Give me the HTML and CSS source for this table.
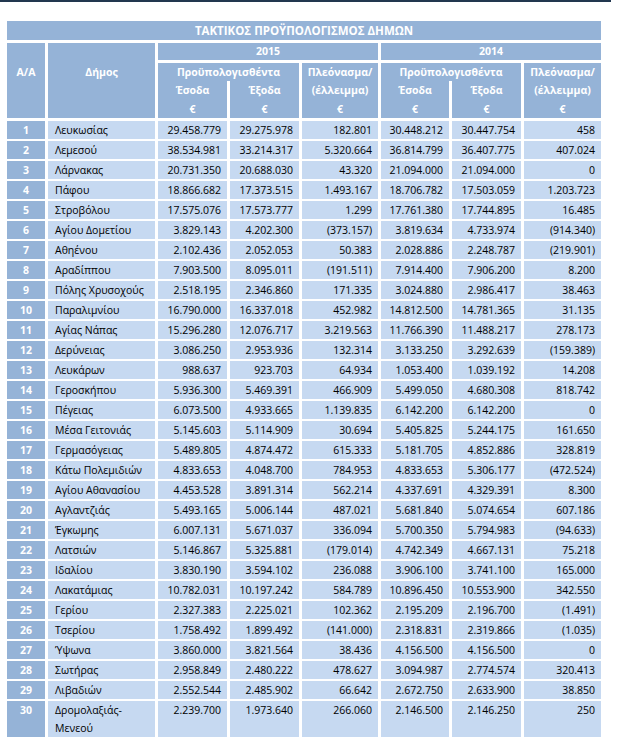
FILE: index.html
```html
<!DOCTYPE html>
<html lang="el">
<head>
<meta charset="utf-8">
<title>Τακτικός Προϋπολογισμός Δήμων</title>
<link rel="stylesheet" href="styles.css">
</head>
<body>
<div class="topline"></div>
<div class="sheet">
  <div class="head">
    <div class="h title">ΤΑΚΤΙΚΟΣ ΠΡΟΫΠΟΛΟΓΙΣΜΟΣ ΔΗΜΩΝ</div>
    <div class="h aa">Α/Α</div>
    <div class="h dimos">Δήμος</div>
    <div class="h y15">2015</div>
    <div class="h y14">2014</div>
    <div class="h prop15">Προϋπολογισθέντα</div>
    <div class="h prop14">Προϋπολογισθέντα</div>
    <div class="h pl15"><span>Πλεόνασμα/</span><span>(έλλειμμα)</span><span>€</span></div>
    <div class="h pl14"><span>Πλεόνασμα/</span><span>(έλλειμμα)</span><span>€</span></div>
    <div class="h es15"><span>Έσοδα</span><span>€</span></div>
    <div class="h ex15"><span>Έξοδα</span><span>€</span></div>
    <div class="h es14"><span>Έσοδα</span><span>€</span></div>
    <div class="h ex14"><span>Έξοδα</span><span>€</span></div>
  </div>
  <div class="body">
    <div class="n">1</div><div class="t">Λευκωσίας</div><div class="v">29.458.779</div><div class="v">29.275.978</div><div class="v">182.801</div><div class="v">30.448.212</div><div class="v">30.447.754</div><div class="v">458</div>
    <div class="n">2</div><div class="t">Λεμεσού</div><div class="v">38.534.981</div><div class="v">33.214.317</div><div class="v">5.320.664</div><div class="v">36.814.799</div><div class="v">36.407.775</div><div class="v">407.024</div>
    <div class="n">3</div><div class="t">Λάρνακας</div><div class="v">20.731.350</div><div class="v">20.688.030</div><div class="v">43.320</div><div class="v">21.094.000</div><div class="v">21.094.000</div><div class="v">0</div>
    <div class="n">4</div><div class="t">Πάφου</div><div class="v">18.866.682</div><div class="v">17.373.515</div><div class="v">1.493.167</div><div class="v">18.706.782</div><div class="v">17.503.059</div><div class="v">1.203.723</div>
    <div class="n">5</div><div class="t">Στροβόλου</div><div class="v">17.575.076</div><div class="v">17.573.777</div><div class="v">1.299</div><div class="v">17.761.380</div><div class="v">17.744.895</div><div class="v">16.485</div>
    <div class="n">6</div><div class="t">Αγίου Δομετίου</div><div class="v">3.829.143</div><div class="v">4.202.300</div><div class="v">(373.157)</div><div class="v">3.819.634</div><div class="v">4.733.974</div><div class="v">(914.340)</div>
    <div class="n">7</div><div class="t">Αθηένου</div><div class="v">2.102.436</div><div class="v">2.052.053</div><div class="v">50.383</div><div class="v">2.028.886</div><div class="v">2.248.787</div><div class="v">(219.901)</div>
    <div class="n">8</div><div class="t">Αραδίππου</div><div class="v">7.903.500</div><div class="v">8.095.011</div><div class="v">(191.511)</div><div class="v">7.914.400</div><div class="v">7.906.200</div><div class="v">8.200</div>
    <div class="n">9</div><div class="t">Πόλης Χρυσοχούς</div><div class="v">2.518.195</div><div class="v">2.346.860</div><div class="v">171.335</div><div class="v">3.024.880</div><div class="v">2.986.417</div><div class="v">38.463</div>
    <div class="n">10</div><div class="t">Παραλιμνίου</div><div class="v">16.790.000</div><div class="v">16.337.018</div><div class="v">452.982</div><div class="v">14.812.500</div><div class="v">14.781.365</div><div class="v">31.135</div>
    <div class="n">11</div><div class="t">Αγίας Νάπας</div><div class="v">15.296.280</div><div class="v">12.076.717</div><div class="v">3.219.563</div><div class="v">11.766.390</div><div class="v">11.488.217</div><div class="v">278.173</div>
    <div class="n">12</div><div class="t">Δερύνειας</div><div class="v">3.086.250</div><div class="v">2.953.936</div><div class="v">132.314</div><div class="v">3.133.250</div><div class="v">3.292.639</div><div class="v">(159.389)</div>
    <div class="n">13</div><div class="t">Λευκάρων</div><div class="v">988.637</div><div class="v">923.703</div><div class="v">64.934</div><div class="v">1.053.400</div><div class="v">1.039.192</div><div class="v">14.208</div>
    <div class="n">14</div><div class="t">Γεροσκήπου</div><div class="v">5.936.300</div><div class="v">5.469.391</div><div class="v">466.909</div><div class="v">5.499.050</div><div class="v">4.680.308</div><div class="v">818.742</div>
    <div class="n">15</div><div class="t">Πέγειας</div><div class="v">6.073.500</div><div class="v">4.933.665</div><div class="v">1.139.835</div><div class="v">6.142.200</div><div class="v">6.142.200</div><div class="v">0</div>
    <div class="n">16</div><div class="t">Μέσα Γειτονιάς</div><div class="v">5.145.603</div><div class="v">5.114.909</div><div class="v">30.694</div><div class="v">5.405.825</div><div class="v">5.244.175</div><div class="v">161.650</div>
    <div class="n">17</div><div class="t">Γερμασόγειας</div><div class="v">5.489.805</div><div class="v">4.874.472</div><div class="v">615.333</div><div class="v">5.181.705</div><div class="v">4.852.886</div><div class="v">328.819</div>
    <div class="n">18</div><div class="t">Κάτω Πολεμιδιών</div><div class="v">4.833.653</div><div class="v">4.048.700</div><div class="v">784.953</div><div class="v">4.833.653</div><div class="v">5.306.177</div><div class="v">(472.524)</div>
    <div class="n">19</div><div class="t">Αγίου Αθανασίου</div><div class="v">4.453.528</div><div class="v">3.891.314</div><div class="v">562.214</div><div class="v">4.337.691</div><div class="v">4.329.391</div><div class="v">8.300</div>
    <div class="n">20</div><div class="t">Αγλαντζιάς</div><div class="v">5.493.165</div><div class="v">5.006.144</div><div class="v">487.021</div><div class="v">5.681.840</div><div class="v">5.074.654</div><div class="v">607.186</div>
    <div class="n">21</div><div class="t">Έγκωμης</div><div class="v">6.007.131</div><div class="v">5.671.037</div><div class="v">336.094</div><div class="v">5.700.350</div><div class="v">5.794.983</div><div class="v">(94.633)</div>
    <div class="n">22</div><div class="t">Λατσιών</div><div class="v">5.146.867</div><div class="v">5.325.881</div><div class="v">(179.014)</div><div class="v">4.742.349</div><div class="v">4.667.131</div><div class="v">75.218</div>
    <div class="n">23</div><div class="t">Ιδαλίου</div><div class="v">3.830.190</div><div class="v">3.594.102</div><div class="v">236.088</div><div class="v">3.906.100</div><div class="v">3.741.100</div><div class="v">165.000</div>
    <div class="n">24</div><div class="t">Λακατάμιας</div><div class="v">10.782.031</div><div class="v">10.197.242</div><div class="v">584.789</div><div class="v">10.896.450</div><div class="v">10.553.900</div><div class="v">342.550</div>
    <div class="n">25</div><div class="t">Γερίου</div><div class="v">2.327.383</div><div class="v">2.225.021</div><div class="v">102.362</div><div class="v">2.195.209</div><div class="v">2.196.700</div><div class="v">(1.491)</div>
    <div class="n">26</div><div class="t">Τσερίου</div><div class="v">1.758.492</div><div class="v">1.899.492</div><div class="v">(141.000)</div><div class="v">2.318.831</div><div class="v">2.319.866</div><div class="v">(1.035)</div>
    <div class="n">27</div><div class="t">Ύψωνα</div><div class="v">3.860.000</div><div class="v">3.821.564</div><div class="v">38.436</div><div class="v">4.156.500</div><div class="v">4.156.500</div><div class="v">0</div>
    <div class="n">28</div><div class="t">Σωτήρας</div><div class="v">2.958.849</div><div class="v">2.480.222</div><div class="v">478.627</div><div class="v">3.094.987</div><div class="v">2.774.574</div><div class="v">320.413</div>
    <div class="n">29</div><div class="t">Λιβαδιών</div><div class="v">2.552.544</div><div class="v">2.485.902</div><div class="v">66.642</div><div class="v">2.672.750</div><div class="v">2.633.900</div><div class="v">38.850</div>
    <div class="n">30</div><div class="t">Δρομολαξιάς-<br>Μενεού</div><div class="v">2.239.700</div><div class="v">1.973.640</div><div class="v">266.060</div><div class="v">2.146.500</div><div class="v">2.146.250</div><div class="v">250</div>
  </div>
</div>
</body>
</html>
```
FILE: styles.css
```css
html, body {
  margin: 0;
  padding: 0;
  background: #ffffff;
}
body {
  font-family: "Open Sans", "Noto Sans", sans-serif;
  font-size: 10.5px;
  color: #000;
}
.topline {
  width: 611px;
  height: 2px;
  background: #22374f;
}
.sheet {
  margin: 19px 0 0 7px;
  width: 594px;
}
.head, .body {
  display: grid;
  grid-template-columns: 38px 107px 69px 69px 76px 68px 69px 77px;
  column-gap: 3px;
}
.head {
  grid-template-rows: 22px 20px 18px 19px 18px;
}
.h {
  background: #95b3d7;
  color: #fff;
  font-weight: 700;
  text-align: center;
  line-height: 18px;
}
.h span { display: block; }
.title {
  grid-column: 1 / -1;
  grid-row: 1;
  margin-bottom: 3px;
  line-height: 19px;
  font-size: 11.5px;
}
.aa { grid-column: 1; grid-row: 2 / 6; padding-top: 20px; }
.dimos { grid-column: 2; grid-row: 2 / 6; padding-top: 20px; }
.y15 { grid-column: 3 / 6; grid-row: 2; margin-bottom: 3px; line-height: 17px; }
.y14 { grid-column: 6 / 9; grid-row: 2; margin-bottom: 3px; line-height: 17px; }
.prop15 { grid-column: 3 / 5; grid-row: 3; }
.prop14 { grid-column: 6 / 8; grid-row: 3; }
.pl15 { grid-column: 5; grid-row: 3 / 6; }
.pl14 { grid-column: 8; grid-row: 3 / 6; }
.pl15 span, .pl14 span { line-height: 18.3px; }
.es15 { grid-column: 3; grid-row: 4 / 6; }
.ex15 { grid-column: 4; grid-row: 4 / 6; }
.es14 { grid-column: 6; grid-row: 4 / 6; }
.ex14 { grid-column: 7; grid-row: 4 / 6; }
.es15 span, .ex15 span, .es14 span, .ex14 span { line-height: 18.5px; }

.body {
  margin-top: 3px;
  row-gap: 2px;
}
.n, .t, .v {
  line-height: 18px;
  background: #c6d9f1;
  white-space: nowrap;
}
.n {
  background: #95b3d7;
  color: #fff;
  font-weight: 700;
  text-align: center;
}
.t {
  padding-left: 7px;
}
.v {
  text-align: right;
  padding-right: 6px;
}
```
